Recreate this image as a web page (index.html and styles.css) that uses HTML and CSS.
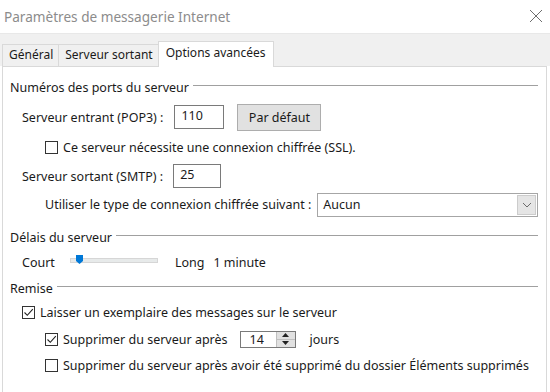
FILE: index.html
```html
<!DOCTYPE html>
<html lang="fr">
<head>
    <meta charset="UTF-8">
    <title>Paramètres de messagerie Internet</title>
    <link rel="stylesheet" href="styles.css">
</head>
<body>
    <div class="window">
        <!-- TITLE BAR -->
        <div class="titlebar">
            <span class="title">Paramètres de messagerie Internet</span>
            <svg class="close-icon" width="14" height="14" viewBox="0 0 14 14">
                <path d="M1 1 L13 13 M13 1 L1 13" stroke="#6e6e6e" stroke-width="1" fill="none"/>
            </svg>
        </div>

        <!-- TABS -->
        <div class="tabstrip">
            <div class="tab">Général</div>
            <div class="tab">Serveur sortant</div>
            <div class="tab active">Options avancées</div>
        </div>

        <!-- PANEL -->
        <div class="panel">
            <div class="group-header"><span>Numéros des ports du serveur</span><div class="group-line"></div></div>

            <div class="row row-pop3 indent-1">
                <span class="label">Serveur entrant (POP3) :</span>
                <div class="textbox port-pop3">110</div>
                <button class="btn">Par défaut</button>
            </div>

            <div class="row row-ssl indent-2">
                <span class="checkbox"></span>
                <span class="check-label">Ce serveur nécessite une connexion chiffrée (SSL).</span>
            </div>

            <div class="row row-smtp indent-1">
                <span class="label">Serveur sortant (SMTP) :</span>
                <div class="textbox port-smtp">25</div>
            </div>

            <div class="row row-crypt indent-2">
                <span class="label">Utiliser le type de connexion chiffrée suivant :</span>
                <div class="select">
                    <span class="select-value">Aucun</span>
                    <span class="select-arrow">
                        <svg width="10" height="6" viewBox="0 0 10 6"><path d="M1 1 L5 5 L9 1" stroke="#6b6b6b" fill="none"/></svg>
                    </span>
                </div>
            </div>

            <div class="group-header gh-2"><span>Délais du serveur</span><div class="group-line"></div></div>

            <div class="row row-timeout indent-1">
                <span class="label">Court</span>
                <div class="slider">
                    <div class="slider-track"></div>
                    <svg class="slider-thumb" width="7" height="9" viewBox="0 0 7 9"><path d="M0 0 H7 V6 L3.5 9 L0 6 Z" fill="#0078d7"/></svg>
                </div>
                <span class="label long">Long</span>
                <span class="label">1 minute</span>
            </div>

            <div class="group-header gh-3"><span>Remise</span><div class="group-line"></div></div>

            <div class="row row-leave indent-1">
                <span class="checkbox checked"><svg width="11" height="11" viewBox="0 0 11 11"><path d="M1.5 5.5 L4.3 8.3 L9.8 2.2" stroke="#222" stroke-width="1.1" fill="none"/></svg></span>
                <span class="check-label">Laisser un exemplaire des messages sur le serveur</span>
            </div>

            <div class="row row-del indent-2">
                <span class="checkbox checked"><svg width="11" height="11" viewBox="0 0 11 11"><path d="M1.5 5.5 L4.3 8.3 L9.8 2.2" stroke="#222" stroke-width="1.1" fill="none"/></svg></span>
                <span class="check-label">Supprimer du serveur après</span>
                <div class="spinner">
                    <span class="spin-value">14</span>
                    <span class="spin-btns">
                        <span class="spin-btn"><svg width="7" height="4" viewBox="0 0 7 4"><path d="M0 4 L3.5 0 L7 4 Z" fill="#222"/></svg></span>
                        <span class="spin-btn"><svg width="7" height="4" viewBox="0 0 7 4"><path d="M0 0 L3.5 4 L7 0 Z" fill="#222"/></svg></span>
                    </span>
                </div>
                <span class="label days">jours</span>
            </div>

            <div class="row row-del2 indent-2">
                <span class="checkbox"></span>
                <span class="check-label">Supprimer du serveur après avoir été supprimé du dossier Éléments supprimés</span>
            </div>
        </div>
    </div>
</body>
</html>
```

FILE: styles.css
```css
:root {
    --ui-font: "Noto Sans", "Open Sans", sans-serif;
    --panel-border: #d9d9d9;
    --field-border: #7a7a7a;
}

body {
    margin: 0;
    font-family: var(--ui-font);
    font-size: 12px;
    color: #1a1a1a;
    background: #ffffff;
}

.window {
    width: 550px;
    height: 392px;
    display: flex;
    flex-direction: column;
    overflow: hidden;
}

/* TITLE BAR */
.titlebar {
    height: 33px;
    display: flex;
    align-items: center;
    justify-content: space-between;
    padding: 0 7px 0 4px;
    background: #ffffff;
}

.title {
    font-size: 13.6px;
    color: #8c8c8c;
    margin-top: -1px;
}

.close-icon {
    margin-top: -1px;
}

/* TABS */
.tabstrip {
    height: 33px;
    background: #f0f0f0;
    border-top: 1px solid #e8e8e8;
    display: flex;
    align-items: flex-end;
    padding-left: 2px;
    box-sizing: border-box;
}

.tab {
    height: 21px;
    line-height: 20px;
    padding: 0 5px 0 6px;
    border: 1px solid var(--panel-border);
    border-bottom: none;
    border-right: none;
    background: #f0f0f0;
    font-size: 12px;
    white-space: nowrap;
}

.tab.active {
    height: 25px;
    line-height: 21px;
    background: #ffffff;
    border-right: 1px solid var(--panel-border);
    padding: 0 8px 0 7px;
    margin-bottom: -1px;
    position: relative;
}

/* PANEL */
.panel {
    flex: 1;
    margin-left: 2px;
    width: 545px;
    box-sizing: border-box;
    background: #ffffff;
    border: 1px solid var(--panel-border);
    border-bottom: none;
    padding: 11px 8px 0 7px;
    font-size: 12.5px;
    white-space: nowrap;
}

.group-header {
    height: 18px;
    display: flex;
    align-items: center;
    gap: 4px;
}

.group-line {
    flex: 1;
    border-top: 1px solid #a0a0a0;
    margin-top: -3px;
}

.gh-2 { margin-top: 11px; }
.gh-3 { margin-top: 7px; }

.row {
    display: flex;
    align-items: center;
    height: 20px;
}

.indent-1 { padding-left: 12px; }
.indent-2 { padding-left: 35px; }

.row-pop3 { height: 26px; margin-top: 8px; }
.row-ssl { margin-top: 7px; }
.row-smtp { height: 26px; margin-top: 6px; }
.row-crypt { height: 25px; margin-top: 3px; }
.row-timeout { margin-top: 6px; }
.row-leave { margin-top: 5px; }
.row-del { margin-top: 7px; }
.row-del2 { margin-top: 6px; }

.textbox {
    height: 24px;
    box-sizing: border-box;
    border: 1px solid var(--field-border);
    line-height: 20px;
    padding-left: 6px;
}

.port-pop3 {
    width: 50px;
    margin-left: 11px;
}

.port-smtp {
    width: 48px;
    margin-left: 10px;
}

.btn {
    margin-left: 13px;
    width: 84px;
    height: 27px;
    background: #e1e1e1;
    border: 1px solid #adadad;
    font-family: var(--ui-font);
    font-size: 12.5px;
    color: #1a1a1a;
    padding: 0;
}

.checkbox {
    width: 13px;
    height: 13px;
    flex-shrink: 0;
    box-sizing: border-box;
    border: 1px solid #333333;
    background: #ffffff;
    display: flex;
    align-items: center;
    justify-content: center;
    margin-right: 5px;
}

.select {
    flex: 1;
    margin-left: 6px;
    height: 24px;
    box-sizing: border-box;
    border: 1px solid #a6a6a6;
    display: flex;
    align-items: center;
    justify-content: space-between;
    padding: 1px;
}

.select-value {
    padding-left: 4px;
}

.select-arrow {
    width: 19px;
    height: 20px;
    background: #e5e5e5;
    border: 1px solid #cccccc;
    box-sizing: border-box;
    display: flex;
    align-items: center;
    justify-content: center;
}

/* SLIDER */
.slider {
    position: relative;
    width: 88px;
    height: 12px;
    margin-left: 15px;
    margin-top: -4px;
}

.slider-track {
    position: absolute;
    left: 0;
    right: 0;
    top: 4px;
    height: 3px;
    background: #e7eaea;
    border: 1px solid #d6d6d6;
}

.slider-thumb {
    position: absolute;
    left: 6px;
    top: 1px;
}

.long { margin-left: 17px; margin-right: 9px; }

/* SPINNER */
.spinner {
    margin-left: 12px;
    width: 56px;
    height: 17px;
    box-sizing: border-box;
    border: 1px solid var(--field-border);
    display: flex;
    justify-content: space-between;
}

.spin-value {
    padding-left: 9px;
    line-height: 15px;
}

.spin-btns {
    width: 18px;
    background: #e1e1e1;
    border-left: 1px solid #c0c0c0;
    display: flex;
    flex-direction: column;
}

.spin-btn {
    flex: 1;
    display: flex;
    align-items: center;
    justify-content: center;
}

.spin-btn + .spin-btn {
    border-top: 1px solid #c0c0c0;
}

.days { margin-left: 14px; }
```
